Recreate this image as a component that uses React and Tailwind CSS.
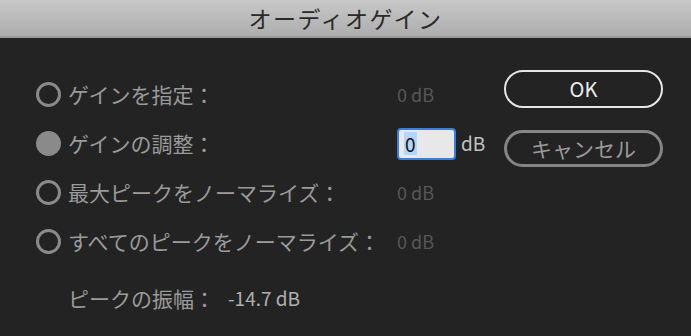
import React from 'react';

const font = { fontFamily: '"Noto Sans CJK JP", "Noto Sans", sans-serif' };

const Radio = ({ checked }) =>
    checked ? (
        <span className="block w-[25px] h-[25px] rounded-full bg-[#8a8a8a] shrink-0" />
    ) : (
        <span className="block w-[25px] h-[25px] rounded-full border-[3px] border-[#8a8a8a] shrink-0" />
    );

const OptionRow = ({ label, checked, children }) => (
    <div className="flex items-center h-[49px]">
        <Radio checked={checked} />
        <span className="ml-[7px] w-[329px] text-[21px] text-[#9a9a9a] whitespace-nowrap">{label}</span>
        {children}
    </div>
);

const DisabledValue = () => <span className="text-[18px] text-[#575757]">0 dB</span>;

export default function App() {
    return (
        <div className="w-[691px] h-[336px] bg-[#232323] overflow-hidden" style={font}>
            {/* Title bar */}
            <div className="h-[38px] bg-gradient-to-b from-[#c8c8c8] to-[#adadad] border-b-2 border-[#9a9a9a] flex items-center justify-center">
                <span className="text-[23px] tracking-[1.5px] text-[#2a2a2a] leading-none">オーディオゲイン</span>
            </div>

            <div className="flex pl-[36px] pt-[32px]">
                {/* Options */}
                <div className="w-[468px] flex flex-col">
                    <OptionRow label="ゲインを指定：">
                        <DisabledValue />
                    </OptionRow>
                    <OptionRow label="ゲインの調整：" checked>
                        <div className="flex items-center">
                            <div className="w-[59px] h-[32px] rounded-[4px] border-2 border-[#3b7fd8] bg-[#e8e8e8] flex items-center pl-[5px]">
                                <span className="bg-[#b4d5fb] text-[#111] text-[19px] leading-[23px] px-[1px]">0</span>
                            </div>
                            <span className="ml-[5px] text-[19px] text-[#c2c2c2]">dB</span>
                        </div>
                    </OptionRow>
                    <OptionRow label="最大ピークをノーマライズ：">
                        <DisabledValue />
                    </OptionRow>
                    <OptionRow label="すべてのピークをノーマライズ：">
                        <DisabledValue />
                    </OptionRow>

                    <div className="flex items-center h-[49px] mt-[8px] pl-[32px]">
                        <span className="w-[160px] text-[21px] text-[#9a9a9a]">ピークの振幅：</span>
                        <span className="text-[19px] text-[#b0b0b0]">-14.7 dB</span>
                    </div>
                </div>

                {/* Buttons */}
                <div className="flex flex-col gap-[22px]">
                    <button className="w-[159px] h-[38px] rounded-full border-2 border-[#e6e6e6] text-[20px] text-[#ececec] flex items-center justify-center">
                        OK
                    </button>
                    <button className="w-[159px] h-[37px] rounded-full border-[3px] border-[#858585] text-[21px] text-[#9a9a9a] flex items-center justify-center">
                        キャンセル
                    </button>
                </div>
            </div>
        </div>
    );
}
